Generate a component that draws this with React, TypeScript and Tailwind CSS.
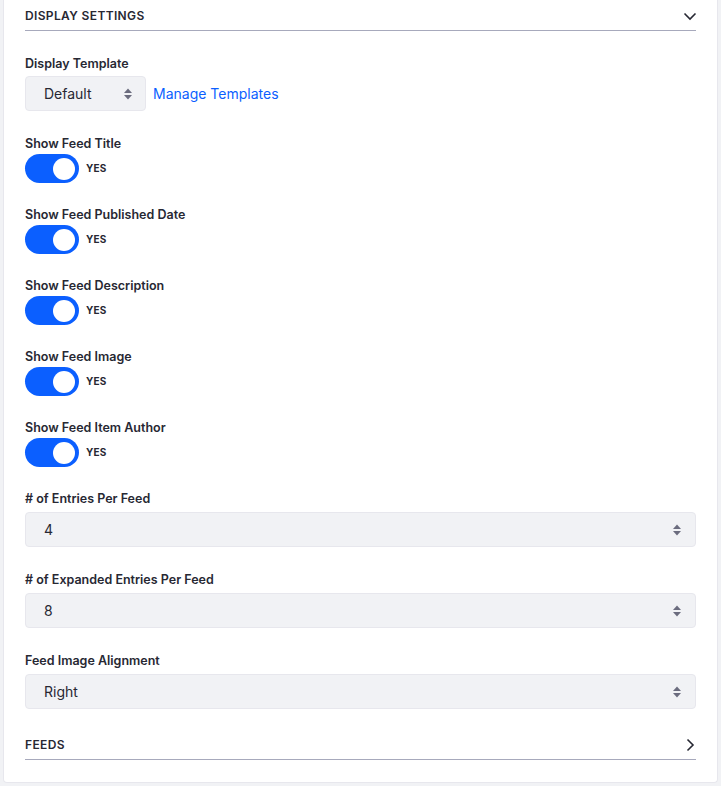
import React from 'react';

const toggles = [
  'Show Feed Title',
  'Show Feed Published Date',
  'Show Feed Description',
  'Show Feed Image',
  'Show Feed Item Author',
];

function SelectArrows() {
  return (
    <svg width="10" height="14" viewBox="0 0 10 14" className="text-[#6b6c7e]">
      <path d="M5 1.5 L9 6 H1 Z" fill="currentColor" />
      <path d="M5 12.5 L9 8 H1 Z" fill="currentColor" />
    </svg>
  );
}

function Toggle() {
  return (
    <div className="flex items-center">
      <div className="flex h-[29px] w-[54px] items-center justify-end rounded-full bg-[#0b5fff] pr-[4px]">
        <div className="h-[22px] w-[22px] rounded-full bg-white" />
      </div>
      <span className="ml-[7px] text-[10px] font-bold tracking-[0.02em] text-[#272833]">YES</span>
    </div>
  );
}

function SelectField({ label, value }: { label: string; value: string }) {
  return (
    <div>
      <div className="mb-[4px] text-[12.5px] font-semibold leading-[18px] text-[#272833]">{label}</div>
      <div className="flex h-[35px] items-center justify-between rounded-[4px] border border-[#e7e7ed] bg-[#f1f2f5] pl-[18px] pr-[13px]">
        <span className="text-[14px] text-[#272833]">{value}</span>
        <SelectArrows />
      </div>
    </div>
  );
}

export default function App() {
  return (
    <div className="min-h-[786px] bg-[#f1f2f5] px-[3px] pb-[3px]" style={{ fontFamily: 'Inter, "Noto Sans", sans-serif' }}>
      <div className="rounded-b-[4px] border-x border-b border-[#e7e7ed] bg-white px-[21px] pb-[22px]">
        {/* Display settings header */}
        <div className="flex h-[31px] items-center justify-between border-b border-[#a7a9bc] pt-[1px]">
          <span className="text-[12px] font-semibold tracking-[0.03em] text-[#272833]">DISPLAY SETTINGS</span>
          <svg width="14" height="14" viewBox="0 0 14 14" className="mr-[-1px]">
            <path d="M1.5 4.5 L7 10 L12.5 4.5" fill="none" stroke="#272833" strokeWidth="1.6" />
          </svg>
        </div>

        <div className="mt-[24px]">
          <div className="mb-[3px] text-[12.5px] font-semibold leading-[18px] text-[#272833]">Display Template</div>
          <div className="flex items-center">
            <div className="flex h-[35px] w-[121px] items-center justify-between rounded-[4px] border border-[#e7e7ed] bg-[#f1f2f5] pl-[18px] pr-[12px]">
              <span className="text-[14px] text-[#272833]">Default</span>
              <SelectArrows />
            </div>
            <a className="ml-[7px] text-[14px] text-[#0b5fff]">Manage Templates</a>
          </div>
        </div>

        <div className="mt-[24px] flex flex-col gap-[23px]">
          {toggles.map((t) => (
            <div key={t}>
              <div className="mb-[1px] text-[12.5px] font-semibold leading-[18px] text-[#272833]">{t}</div>
              <Toggle />
            </div>
          ))}
        </div>

        <div className="mt-[23px] flex flex-col gap-[24px]">
          <SelectField label="# of Entries Per Feed" value="4" />
          <SelectField label="# of Expanded Entries Per Feed" value="8" />
          <SelectField label="Feed Image Alignment" value="Right" />
        </div>

        {/* Feeds header */}
        <div className="mt-[20px] flex h-[31px] items-center justify-between border-b border-[#a7a9bc] pt-[1px]">
          <span className="text-[12px] font-semibold tracking-[0.03em] text-[#272833]">FEEDS</span>
          <svg width="14" height="14" viewBox="0 0 14 14" className="mr-[-1px]">
            <path d="M4.5 1.5 L10 7 L4.5 12.5" fill="none" stroke="#272833" strokeWidth="1.6" />
          </svg>
        </div>
      </div>
    </div>
  );
}
